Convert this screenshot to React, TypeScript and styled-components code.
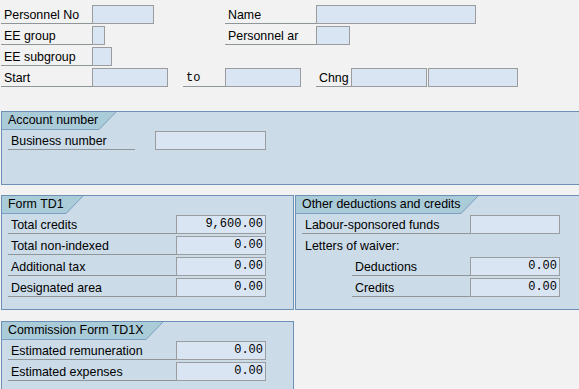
import styled, { createGlobalStyle } from 'styled-components';

const GlobalStyle = createGlobalStyle`
  html, body {
    margin: 0;
    padding: 0;
    background: #f2f2f2;
  }
  body {
    font-family: 'Liberation Sans', Arial, sans-serif;
    font-size: 12.4px;
    color: #000;
  }
`;

const Page = styled.div`
  width: 579px;
  height: 389px;
  overflow: hidden;
  padding: 5px 0 0 1px;
  box-sizing: border-box;
  background: #f2f2f2;
`;

const Header = styled.div`
  display: flex;
  flex-direction: column;
  gap: 2px;
`;

const Row = styled.div<{ $indent?: number }>`
  display: flex;
  height: 19px;
  padding-left: ${(p) => p.$indent ?? 0}px;
`;

const Label = styled.div<{ $w: number; $ml?: number; $mono?: boolean; $plain?: boolean }>`
  width: ${(p) => p.$w}px;
  margin-left: ${(p) => p.$ml ?? 0}px;
  height: 19px;
  box-sizing: border-box;
  padding: 1px 0 0 3px;
  line-height: 18px;
  white-space: nowrap;
  overflow: hidden;
  border-bottom: ${(p) => (p.$plain ? 'none' : '1px solid #8f9699')};
  font-family: ${(p) =>
    p.$mono ? "'Liberation Mono', 'Courier New', monospace" : 'inherit'};
  font-size: ${(p) => (p.$mono ? '12px' : 'inherit')};
`;

const Field = styled.div<{ $w: number; $ml?: number }>`
  width: ${(p) => p.$w}px;
  margin-left: ${(p) => p.$ml ?? 0}px;
  height: 19px;
  box-sizing: border-box;
  border: 1px solid #9a9c9e;
  background: #d9e5f3;
  font-family: 'Liberation Mono', 'Courier New', monospace;
  font-size: 12px;
  line-height: 17px;
  text-align: right;
  padding-right: 2px;
  white-space: nowrap;
`;

const Group = styled.div<{ $w: number; $h: number; $mt: number; $ml?: number }>`
  width: ${(p) => p.$w}px;
  height: ${(p) => p.$h}px;
  margin-top: ${(p) => p.$mt}px;
  margin-left: ${(p) => p.$ml ?? 0}px;
  box-sizing: border-box;
  border: 1px solid #6d90b6;
  background: #cbdbe8;
  flex-shrink: 0;
`;

const GroupRow = styled.div`
  display: flex;
  align-items: flex-start;
`;

const TabBar = styled.div`
  display: flex;
  height: 18px;
`;

const TabText = styled.div`
  background: #aacbd8;
  border-bottom: 1px solid #7e9fc0;
  box-sizing: border-box;
  height: 18px;
  line-height: 17px;
  padding: 0 0 0 6px;
  white-space: nowrap;
`;

const Rows = styled.div<{ $pt?: number }>`
  display: flex;
  flex-direction: column;
  gap: 2px;
  padding: ${(p) => p.$pt ?? 1}px 0 0 6px;
`;

function Tab({ title, w }: { title: string; w: number }) {
  return (
    <TabBar>
      <TabText style={{ width: w }}>{title}</TabText>
      <svg width="17" height="18" viewBox="0 0 17 18">
        <polygon points="0,0 17,0 0,18" fill="#aacbd8" />
        <line x1="0" y1="17.5" x2="17" y2="0" stroke="#7e9fc0" strokeWidth="1" />
      </svg>
    </TabBar>
  );
}

function AmountRow({ label, value, lw = 168 }: { label: string; value: string; lw?: number }) {
  return (
    <Row>
      <Label $w={lw}>{label}</Label>
      <Field $w={90}>{value}</Field>
    </Row>
  );
}

export default function App() {
  return (
    <Page>
      <GlobalStyle />
      <Header>
        <Row>
          <Label $w={91}>Personnel No</Label>
          <Field $w={62} />
          <Label $w={91} $ml={71}>Name</Label>
          <Field $w={160} />
        </Row>
        <Row>
          <Label $w={91}>EE group</Label>
          <Field $w={13} />
          <Label $w={91} $ml={120}>Personnel ar</Label>
          <Field $w={34} />
        </Row>
        <Row>
          <Label $w={91}>EE subgroup</Label>
          <Field $w={20} />
        </Row>
        <Row>
          <Label $w={91}>Start</Label>
          <Field $w={76} />
          <Label $w={42} $ml={15} $mono>to</Label>
          <Field $w={76} />
          <Label $w={35} $ml={15}>Chng</Label>
          <Field $w={76} />
          <Field $w={90} $ml={1} />
        </Row>
      </Header>

      <Group $w={600} $h={74} $mt={24}>
        <Tab title="Account number" w={97} />
        <Rows $pt={1}>
          <Row>
            <Label $w={127}>Business number</Label>
            <Field $w={111} $ml={20} />
          </Row>
        </Rows>
      </Group>

      <GroupRow>
        <Group $w={293} $h={115} $mt={10}>
          <Tab title="Form TD1" w={64} />
          <Rows $pt={1}>
            <AmountRow label="Total credits" value="9,600.00" />
            <AmountRow label="Total non-indexed" value="0.00" />
            <AmountRow label="Additional tax" value="0.00" />
            <AmountRow label="Designated area" value="0.00" />
          </Rows>
        </Group>
        <Group $w={300} $h={115} $mt={10} $ml={1}>
          <Tab title="Other deductions and credits" w={165} />
          <Rows $pt={1}>
            <Row>
              <Label $w={168}>Labour-sponsored funds</Label>
              <Field $w={90} />
            </Row>
            <Row>
              <Label $w={168} $plain>Letters of waiver:</Label>
            </Row>
            <Row $indent={50}>
              <Label $w={118}>Deductions</Label>
              <Field $w={90}>0.00</Field>
            </Row>
            <Row $indent={50}>
              <Label $w={118}>Credits</Label>
              <Field $w={90}>0.00</Field>
            </Row>
          </Rows>
        </Group>
      </GroupRow>

      <Group $w={293} $h={80} $mt={11}>
        <Tab title="Commission Form TD1X" w={144} />
        <Rows $pt={1}>
          <AmountRow label="Estimated remuneration" value="0.00" />
          <AmountRow label="Estimated expenses" value="0.00" />
        </Rows>
      </Group>
    </Page>
  );
}
